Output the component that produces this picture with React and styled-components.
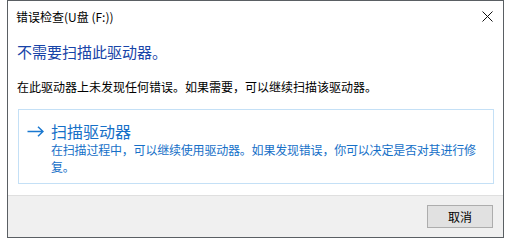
import React from 'react';
import styled, { createGlobalStyle } from 'styled-components';

const Global = createGlobalStyle`
  html, body {
    margin: 0;
    padding: 0;
    background: #ffffff;
  }
  body {
    font-family: "Noto Sans CJK SC", "Microsoft YaHei UI", sans-serif;
    -webkit-font-smoothing: antialiased;
  }
`

const Window = styled.div`
  margin-left: 7px;
  width: 497px;
  height: 238px;
  box-sizing: border-box;
  border: 1px solid #5a5f63;
  background: #ffffff;
  display: flex;
  flex-direction: column;
`

const TitleBar = styled.div`
  height: 30px;
  display: flex;
  align-items: center;
  justify-content: space-between;
  padding: 0 10px 0 8px;
  font-size: 12px;
  color: #000000;
`

const CloseButton = styled.div`
  width: 12px;
  height: 12px;
  display: flex;
  align-items: center;
  justify-content: center;
`

const Content = styled.div`
  flex: 1;
  padding: 11px 9px 0 9px;
`

const Heading = styled.div`
  font-size: 15px;
  line-height: 20px;
  color: #1744a8;
`

const Message = styled.div`
  margin-top: 16px;
  font-size: 12px;
  line-height: 17px;
  color: #000000;
`

const CommandLink = styled.div`
  margin: 14px 0 0 1px;
  box-sizing: border-box;
  height: 75px;
  border: 1px solid #c4e0f6;
  display: flex;
  padding: 11px 4px 0 8px;
  gap: 7px;
  cursor: pointer;
`

const Arrow = styled.svg`
  flex: none;
  margin-top: 5px;
`

const LinkText = styled.div`
  flex: 1;
  color: #1670c8;
`

const LinkTitle = styled.div`
  font-size: 16px;
  line-height: 20px;
`

const LinkDesc = styled.div`
  font-size: 12px;
  line-height: 17px;
  letter-spacing: -0.2px;
`

const Footer = styled.div`
  height: 42px;
  box-sizing: border-box;
  border-top: 1px solid #dfdfdf;
  background: #f0f0f0;
  display: flex;
  justify-content: flex-end;
  align-items: flex-start;
  padding: 9px 10px 0 0;
`

const Button = styled.button`
  width: 66px;
  height: 23px;
  box-sizing: border-box;
  border: 1px solid #adadad;
  background: #e1e1e1;
  font-family: inherit;
  font-size: 12px;
  color: #000000;
  padding: 0;
  line-height: 21px;
`

export default function App() {
  return (
    <>
      <Global />
      <Window>
        <TitleBar>
          <span>错误检查(U盘 (F:))</span>
          <CloseButton>
            <svg width="11" height="11" viewBox="0 0 11 11">
              <path d="M0.5 0.5 L10.5 10.5 M10.5 0.5 L0.5 10.5" stroke="#111" strokeWidth="1" fill="none" />
            </svg>
          </CloseButton>
        </TitleBar>
        <Content>
          <Heading>不需要扫描此驱动器。</Heading>
          <Message>在此驱动器上未发现任何错误。如果需要，可以继续扫描该驱动器。</Message>
          <CommandLink>
            <Arrow width="17" height="11" viewBox="0 0 17 11">
              <path d="M0.5 5.5 H16 M11 0.7 L16 5.5 L11 10.3" stroke="#1a78d0" strokeWidth="1.5" fill="none" />
            </Arrow>
            <LinkText>
              <LinkTitle>扫描驱动器</LinkTitle>
              <LinkDesc>在扫描过程中，可以继续使用驱动器。如果发现错误，你可以决定是否对其进行修复。</LinkDesc>
            </LinkText>
          </CommandLink>
        </Content>
        <Footer>
          <Button>取消</Button>
        </Footer>
      </Window>
    </>
  );
}
